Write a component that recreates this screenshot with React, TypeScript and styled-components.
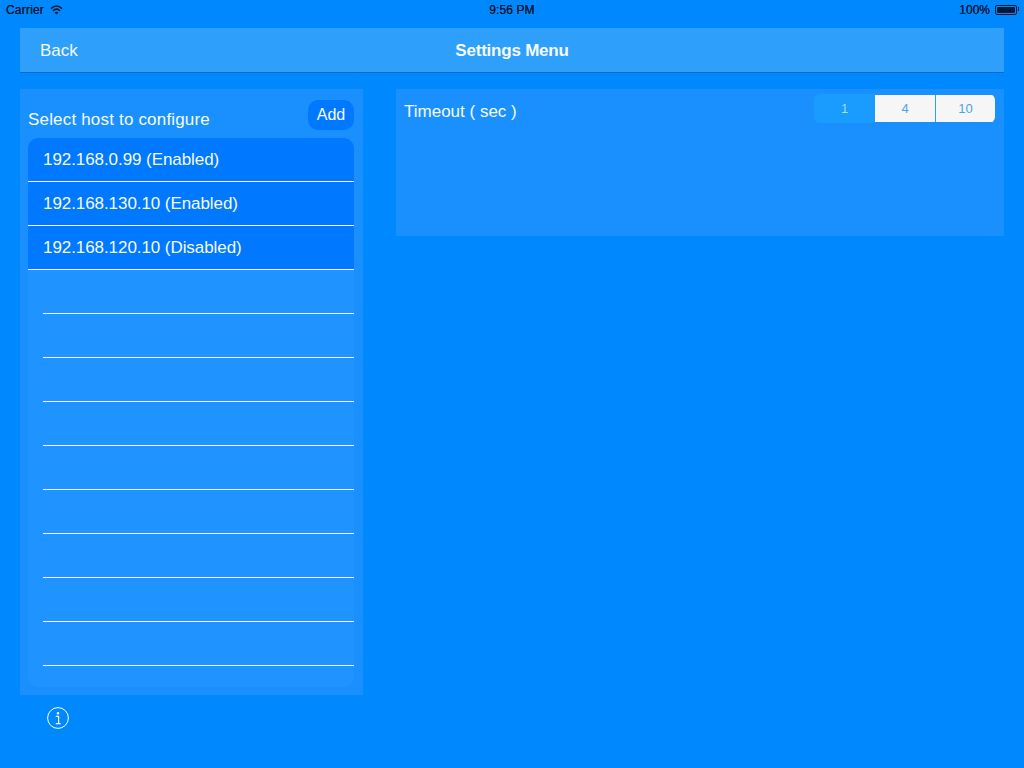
import React from "react";
import styled, { createGlobalStyle } from "styled-components";

const Global = createGlobalStyle`
  html, body { margin: 0; padding: 0; background: #0088ff; }
  body { font-family: "Liberation Sans", Arial, sans-serif; }
`;

const Page = styled.div`
  width: 1024px;
  height: 768px;
  background: #0088ff;
  color: #f6fbff;
  display: flex;
  flex-direction: column;
  overflow: hidden;
`;

const StatusBar = styled.div`
  height: 20px;
  padding: 0 6px;
  display: grid;
  grid-template-columns: 1fr auto 1fr;
  align-items: center;
  font-size: 12px;
  color: #04182e;
  text-shadow: 0 0 0.6px #04182e;
`;

const StatusLeft = styled.div`
  display: flex;
  align-items: center;
  gap: 6px;
  letter-spacing: 0.2px;
`;

const StatusTime = styled.div`
  font-size: 12px;
  letter-spacing: 0.1px;
`;

const StatusRight = styled.div`
  display: flex;
  align-items: center;
  justify-content: flex-end;
  gap: 5px;
`;

const Battery = styled.div`
  width: 18px;
  height: 6px;
  border: 1px solid #04182e;
  border-radius: 2px;
  padding: 1px;
  margin-right: 1px;
  position: relative;
  &::before {
    content: "";
    display: block;
    height: 100%;
    background: #04182e;
    border-radius: 1px;
  }
  &::after {
    content: "";
    position: absolute;
    right: -3px;
    top: 1px;
    width: 1.5px;
    height: 4px;
    background: #04182e;
  }
`;

const NavBar = styled.div`
  margin: 8px 20px 0;
  height: 45px;
  box-sizing: border-box;
  padding: 1px 20px 0;
  background: #2e9ffb;
  border-bottom: 1px solid #0f69c4;
  display: grid;
  grid-template-columns: 1fr auto 1fr;
  align-items: center;
  font-size: 17px;
`;

const NavTitle = styled.div`
  font-weight: 700;
  font-size: 17px;
  letter-spacing: -0.22px;
`;

const Content = styled.div`
  margin: 16px 20px 0;
  display: flex;
  justify-content: space-between;
  align-items: flex-start;
`;

const HostPanel = styled.div`
  width: 343px;
  height: 606px;
  box-sizing: border-box;
  padding: 11px 9px 8px 8px;
  background: #1a90ff;
  display: flex;
  flex-direction: column;
`;

const HostHeader = styled.div`
  display: flex;
  justify-content: space-between;
  height: 38px;
`;

const HostLabel = styled.div`
  font-size: 17px;
  line-height: 20px;
  margin-top: 10px;
  letter-spacing: 0.18px;
`;

const AddButton = styled.div`
  width: 46px;
  height: 30px;
  background: #0078ff;
  border-radius: 10px;
  font-size: 16px;
  display: flex;
  align-items: center;
  justify-content: center;
`;

const HostTable = styled.div`
  flex: 1;
  border-radius: 10px;
  background: #1f93ff;
  overflow: hidden;
`;

const Row = styled.div<{ $filled: boolean }>`
  height: 44px;
  box-sizing: border-box;
  padding-left: ${(p) => (p.$filled ? 15 : 0)}px;
  margin-left: ${(p) => (p.$filled ? 0 : 15)}px;
  background: ${(p) => (p.$filled ? "#0078ff" : "transparent")};
  border-bottom: 1px solid #fff;
  display: flex;
  align-items: center;
  font-size: 17px;
  letter-spacing: -0.07px;
`;

const TimeoutPanel = styled.div`
  width: 608px;
  height: 147px;
  box-sizing: border-box;
  padding: 5px 9px 0 8px;
  background: #1a90ff;
  display: flex;
  justify-content: space-between;
  align-items: flex-start;
`;

const TimeoutLabel = styled.div`
  font-size: 17px;
  line-height: 20px;
  margin-top: 8px;
`;

const Segmented = styled.div`
  display: flex;
  height: 29px;
  width: 181px;
  border-radius: 6px;
  overflow: hidden;
`;

const Segment = styled.div<{ $active: boolean; $wide: number; $divider: boolean }>`
  width: ${(p) => p.$wide}px;
  box-sizing: border-box;
  background: ${(p) => (p.$active ? "#1a9cff" : "#f6f6f6")};
  color: ${(p) => (p.$active ? "#a9dcff" : "#4aa3ea")};
  border-left: ${(p) => (p.$divider ? "1px solid #2aa2f5" : "none")};
  margin: ${(p) => (p.$active ? "0" : "1px 0")};
  font-size: 13px;
  display: flex;
  align-items: center;
  justify-content: center;
`;

const InfoSlot = styled.div`
  margin: 12px 0 0 27px;
  width: 22px;
  height: 22px;
`;

const hosts = [
  "192.168.0.99 (Enabled)",
  "192.168.130.10 (Enabled)",
  "192.168.120.10 (Disabled)",
  "", "", "", "", "", "", "", "", "", "",
];

const segments = [
  { label: "1", width: 61, active: true, divider: false },
  { label: "4", width: 60, active: false, divider: false },
  { label: "10", width: 60, active: false, divider: true },
];

export default function App() {
  return (
    <Page>
      <Global />
      <StatusBar>
        <StatusLeft>
          <span>Carrier</span>
          <svg width="13" height="10" viewBox="0 0 13 10" fill="none" stroke="#04182e">
            <path d="M1 3.6C4.4 .4 8.6 .4 12 3.6" strokeWidth="1.6" />
            <path d="M3 5.8C5.2 3.8 7.8 3.8 10 5.8" strokeWidth="1.6" />
            <path d="M6.5 9.6 4.4 7.5C5.7 6.5 7.3 6.5 8.6 7.5Z" fill="#04182e" stroke="none" />
          </svg>
        </StatusLeft>
        <StatusTime>9:56 PM</StatusTime>
        <StatusRight>
          <span>100%</span>
          <Battery />
        </StatusRight>
      </StatusBar>
      <NavBar>
        <span>Back</span>
        <NavTitle>Settings Menu</NavTitle>
        <span />
      </NavBar>
      <Content>
        <div>
          <HostPanel>
            <HostHeader>
              <HostLabel>Select host to configure</HostLabel>
              <AddButton>Add</AddButton>
            </HostHeader>
            <HostTable>
              {hosts.map((h, i) => (
                <Row key={i} $filled={h !== ""}>{h}</Row>
              ))}
            </HostTable>
          </HostPanel>
          <InfoSlot>
            <svg width="22" height="22" viewBox="0 0 22 22" fill="none" stroke="#fff">
              <circle cx="11" cy="11" r="10.4" strokeWidth="1" />
              <circle cx="11" cy="6.3" r="1.2" fill="#fff" stroke="none" />
              <path d="M8.8 9.3H11.6V16.2M8.8 16.6H13.6" strokeWidth="1.2" />
            </svg>
          </InfoSlot>
        </div>
        <TimeoutPanel>
          <TimeoutLabel>Timeout ( sec )</TimeoutLabel>
          <Segmented>
            {segments.map((s) => (
              <Segment key={s.label} $active={s.active} $wide={s.width} $divider={s.divider}>{s.label}</Segment>
            ))}
          </Segmented>
        </TimeoutPanel>
      </Content>
    </Page>
  );
}
